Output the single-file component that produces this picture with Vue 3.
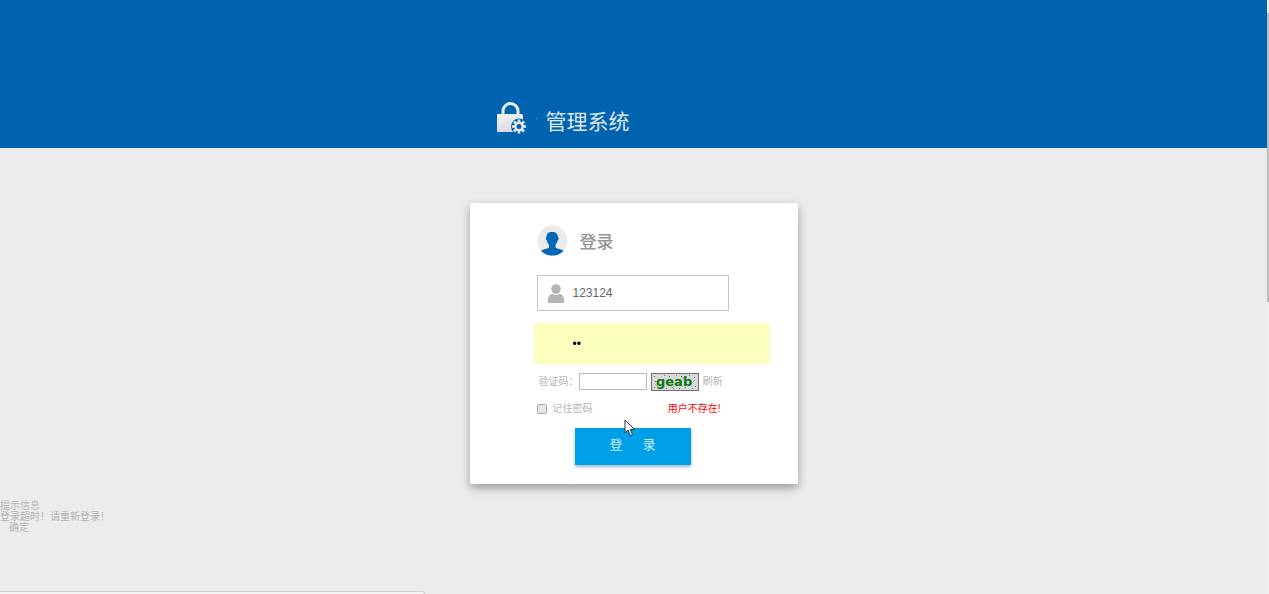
<script setup>
import { ref } from 'vue'

const username = ref('123124')
const password = ref('12')
const captcha = ref('')
const remember = ref(false)
const error = ref('用户不存在!')

const specks = [
  [3, 3], [9, 14], [13, 2], [18, 3], [22, 15], [25, 2], [30, 3], [34, 14],
  [38, 2], [43, 4], [44, 13], [4, 8], [3, 14], [28, 15], [15, 15], [41, 15],
]
</script>

<template>
  <div class="screen">
    <div class="page">
      <header class="banner">
        <div class="brand">
          <svg class="lock" width="32" height="34" viewBox="0 0 32 34" aria-hidden="true">
            <defs>
              <linearGradient id="lockFill" x1="0" y1="0" x2="0" y2="1">
                <stop offset="0" stop-color="#f0f1f2" />
                <stop offset="1" stop-color="#d8dbde" />
              </linearGradient>
            </defs>
            <path d="M7 15V10a7.500 7.500 0 0 1 15 0v5" fill="none" stroke="#eceef0" stroke-width="3" />
            <rect x="1" y="13" width="26" height="18" rx="1.500" fill="url(#lockFill)" />
            <circle cx="23" cy="25.500" r="8" fill="#0063b0" />
            <g stroke="#e8ebee" stroke-width="2.600">
              <path d="M23 18.500v14M16 25.500h14M18 20.500l10 10M28 20.500l-10 10" />
            </g>
            <circle cx="23" cy="25.500" r="4.800" fill="#e8ebee" />
            <circle cx="23" cy="25.500" r="2.500" fill="#0063b0" />
            <path d="M1 13h17v6a8 8 0 0 0-3 12H2.500A1.500 1.500 0 0 1 1 29.500z" fill="url(#lockFill)" />
          </svg>
          <span class="dot"></span>
          <h1>管理系统</h1>
        </div>
      </header>

      <main>
        <form class="card" @submit.prevent>
          <div class="title">
            <svg width="31" height="31" viewBox="0 0 31 31" aria-hidden="true">
              <circle cx="15.500" cy="15.500" r="15" fill="#ebebeb" />
              <path
                d="M15 7c4 0 6 2 6 5.500 1 .3.800 2.700-.5 3.300-.4 2-1.200 3-2 3.900v2.800c1.800 1.600 5.800 1.500 8 3.300C23.800 29.500 19.500 30.500 15.500 30.500S7 29.500 4 25.800c2.200-1.800 6.200-1.700 8-3.300v-2.800c-.9-.9-1.700-1.900-2-3.900-1.300-.6-1.600-3-.6-3.300C9.300 9 11 7 15 7z"
                fill="#0068b7"
              />
            </svg>
            <h2>登录</h2>
          </div>

          <div class="user-field">
            <svg width="16" height="19" viewBox="0 0 16 19" aria-hidden="true">
              <circle cx="8" cy="5" r="4.800" fill="#b5b5b5" />
              <path d="M0 19v-3.500C0 12 2 10.200 4.500 9.700c2 1.600 5 1.600 7 0C14 10.200 16 12 16 15.500V19z" fill="#b5b5b5" />
            </svg>
            <input v-model="username" type="text" aria-label="用户名" />
          </div>

          <input v-model="password" class="password" type="password" aria-label="密码" />

          <div class="captcha">
            <label for="captcha">验证码：</label>
            <input id="captcha" v-model="captcha" type="text" />
            <svg width="48" height="18" viewBox="0 0 48 18" role="img" aria-label="geab">
              <rect x="0.500" y="0.500" width="47" height="17" fill="#d9d9d9" stroke="#707070" />
              <rect v-for="(s, i) in specks" :key="i" :x="s[0]" :y="s[1]" width="1" height="1" fill="#666" />
              <path d="M4 11l3 3M31 4l3 2M44 7l-2 2M20 14l3 1" stroke="#a7a7a7" fill="none" />
              <text x="5" y="13" class="code">geab</text>
            </svg>
            <a href="#">刷新</a>
          </div>

          <div class="options">
            <label><input v-model="remember" type="checkbox" /><span>记住密码</span></label>
            <span class="error">{{ error }}</span>
          </div>

          <button class="submit" type="submit"><span>登</span><span>录</span></button>
        </form>

        <section class="notice">
          <p>提示信息</p>
          <p>登录超时！请重新登录！</p>
          <p><a href="#">确定</a></p>
        </section>
      </main>
    </div>

    <div class="scrollbar"><div class="thumb"></div></div>
    <div class="status"></div>
    <svg class="cursor" width="12" height="18" viewBox="0 0 12 18" aria-hidden="true">
      <path d="M1 1v13l3-3 2.200 5.500 2.300-1L6.300 10.500H10.500z" fill="#fff" stroke="#2b3340" />
    </svg>
  </div>
</template>

<style>
body {
  margin: 0;
  background: #ececec;
}
</style>

<style scoped>
* {
  box-sizing: border-box;
}

.screen {
  position: relative;
  display: flex;
  min-height: 100vh;
  overflow: hidden;
  background: #ececec;
  color: #b5b5b5;
  font: 10px/11px "Liberation Sans", "Noto Sans CJK SC", sans-serif;
}

.page {
  flex: 1;
}

.banner {
  display: flex;
  justify-content: center;
  align-items: flex-end;
  height: 148px;
  padding-bottom: 13px;
  background: #0063b0;
}

.brand {
  display: flex;
  align-items: center;
  width: 276px;
}

.dot {
  width: 1px;
  height: 1px;
  margin: 0 9px 0 8px;
  background: #5b9bd0;
}

h1,
h2,
p {
  margin: 0;
}

h1 {
  padding-top: 8px;
  color: #dfe7ee;
  font-size: 21px;
  font-weight: 400;
  line-height: 24px;
}

main {
  padding-top: 55px;
}

.card {
  display: flex;
  flex-direction: column;
  width: 328px;
  margin: 0 auto;
  padding: 22px 28px 19px 67px;
  border-radius: 2px;
  background: #fff;
  box-shadow: 0 4px 10px rgba(0, 0, 0, 0.35);
}

.title {
  display: flex;
  align-items: center;
  gap: 12px;
  margin-bottom: 19px;
}

h2 {
  padding-top: 4px;
  color: #959595;
  font-size: 17px;
  font-weight: 500;
  line-height: 24px;
}

input {
  border: 0;
  outline: 0;
  font-family: "Liberation Sans", sans-serif;
}

.user-field {
  display: flex;
  align-items: center;
  gap: 9px;
  width: 192px;
  height: 36px;
  padding: 0 10px;
  border: 1px solid #c6c6c6;
}

.user-field input {
  flex: 1;
  min-width: 0;
  padding: 0;
  color: #666;
  font-size: 12px;
}

.password {
  height: 41px;
  margin: 12px 0 8px -3px;
  padding: 0 39px;
  background: #faffbd;
  color: #000;
  font-size: 12px;
}

.captcha {
  display: flex;
  align-items: center;
  height: 19px;
  padding-left: 2px;
}

.captcha input {
  width: 68px;
  height: 17px;
  margin-right: 4px;
  border: 1px solid #bbb;
}

.captcha a,
.notice a {
  color: inherit;
  text-decoration: none;
}

.captcha a {
  margin-left: 4px;
}

.code {
  fill: #0b780b;
  font: bold 13px "DejaVu Sans", sans-serif;
}

.options {
  display: flex;
  justify-content: space-between;
  align-items: center;
  width: 184px;
  margin: 12px 0 14px;
}

.options label {
  display: flex;
  align-items: center;
  gap: 6px;
}

.options input {
  appearance: none;
  width: 10px;
  height: 10px;
  margin: 0;
  border: 1px solid #aaa;
  border-radius: 2px;
  background: #e4e4e4;
}

.options input:checked {
  background: #00a0e9;
}

.error {
  color: #f00;
}

.submit {
  display: flex;
  justify-content: center;
  gap: 20px;
  width: 116px;
  height: 37px;
  margin-left: 38px;
  padding: 7px 0 0;
  border: 0;
  background: #00a0e9;
  box-shadow: 0 2px 3px rgba(0, 80, 150, 0.4);
  color: #d3effb;
  font: 13px/18px "Noto Sans CJK SC", sans-serif;
}

.notice {
  padding: 16px 0;
}

.notice a {
  margin-left: 9px;
}

.scrollbar {
  width: 2px;
  padding-top: 13px;
  background: #f1f1f1;
}

.thumb {
  height: 289px;
  background: #bcbcbc;
}

.status {
  position: absolute;
  bottom: 0;
  left: 0;
  width: 425px;
  height: 3px;
  border-top: 1px solid #d0d0d0;
  border-right: 1px solid #d0d0d0;
  border-top-right-radius: 3px;
  background: #f4f4f4;
}

.cursor {
  position: absolute;
  top: 419px;
  left: 624px;
}
</style>
